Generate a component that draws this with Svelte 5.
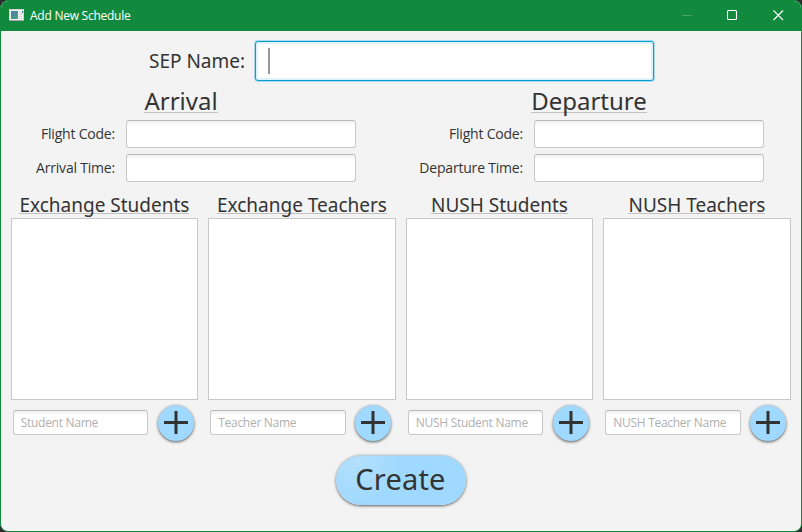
<script>
  const flights = [
    { title: 'Arrival', time: 'Arrival Time:' },
    { title: 'Departure', time: 'Departure Time:' }
  ];
  const groups = [
    { title: 'Exchange Students', hint: 'Student Name' },
    { title: 'Exchange Teachers', hint: 'Teacher Name' },
    { title: 'NUSH Students', hint: 'NUSH Student Name' },
    { title: 'NUSH Teachers', hint: 'NUSH Teacher Name' }
  ];
</script>

<div class="window">
  <header>
    <svg class="app-icon" width="16" height="14" viewBox="0 0 16 14">
      <defs>
        <linearGradient id="pane" x1="0" y1="0" x2="1" y2="1">
          <stop offset="0" stop-color="#467bb0" />
          <stop offset="1" stop-color="#4fa37b" />
        </linearGradient>
      </defs>
      <rect x="0.5" y="1.5" width="14" height="11" fill="#f4f4f4" stroke="#d5d0d5" />
      <path d="M0 12.5h15" stroke="#a9a0a9" />
      <rect x="2" y="3" width="7" height="8" fill="url(#pane)" />
      <path d="M10 4.5h3M10 6.5h3M10 8.5h3M10 10.5h3" stroke="#d3d3d3" />
      <path d="M13.5 3v2" stroke="#477a9f" />
    </svg>
    <h1>Add New Schedule</h1>
    <div class="controls">
      <svg width="46" height="30" viewBox="0 0 46 30"><path d="M18 15.5h10" stroke="#48a467" /></svg>
      <svg width="46" height="30" viewBox="0 0 46 30"><rect x="17.5" y="10.5" width="9" height="9" rx="1" fill="none" stroke="#fff" stroke-width="1.1" /></svg>
      <svg width="46" height="30" viewBox="0 0 46 30"><path d="M17.5 10.5l9.5 9.5M27 10.5l-9.5 9.5" stroke="#fff" stroke-width="1.1" /></svg>
    </div>
  </header>

  <main>
    <div class="sep">
      <span>SEP Name:</span>
      <div class="sep-field"><i></i></div>
    </div>

    <div class="flights">
      {#each flights as flight}
        <section>
          <h2><span>{flight.title}</span></h2>
          <div class="row"><span>Flight Code:</span><div class="field"></div></div>
          <div class="row"><span>{flight.time}</span><div class="field"></div></div>
        </section>
      {/each}
    </div>

    <div class="groups">
      {#each groups as group}
        <section>
          <h3><span>{group.title}</span></h3>
          <div class="list"></div>
          <div class="add">
            <div class="field small">{group.hint}</div>
            <button class="round" aria-label="Add">
              <svg width="24" height="23" viewBox="0 0 24 23"><path d="M0 11.5h24M12 0v23" stroke="#333" stroke-width="3" /></svg>
            </button>
          </div>
        </section>
      {/each}
    </div>

    <button class="create">Create</button>
  </main>
</div>

<style>
  :global(body) {
    margin: 0;
    background: #2d2d2d;
  }
  * {
    box-sizing: border-box;
  }
  .window {
    width: 802px;
    height: 532px;
    overflow: hidden;
    border: 1px solid #128a3e;
    border-radius: 8px;
    background: #f3f3f3;
    color: #333;
    font-family: "Noto Sans", "Open Sans", sans-serif;
  }
  header {
    display: flex;
    align-items: center;
    height: 30px;
    padding-left: 8px;
    background: #128a3e;
    color: #fff;
  }
  .app-icon {
    margin-top: -2px;
  }
  h1, h2, h3 {
    margin: 0;
    font-weight: 400;
  }
  h1 {
    margin-left: 5px;
    font-family: "Open Sans", "Noto Sans", sans-serif;
    font-size: 12px;
    letter-spacing: -0.25px;
    line-height: 28px;
  }
  .controls {
    display: flex;
    height: 30px;
    margin: -2px -1px 0 auto;
  }
  main {
    padding: 10px;
  }
  .sep {
    display: flex;
    align-items: center;
    height: 40px;
    padding-left: 138px;
    font-size: 19px;
  }
  .sep span {
    width: 106px;
    line-height: 40px;
  }
  .sep-field {
    width: 399px;
    height: 40px;
    padding: 6px 12px;
    border: 1px solid #039ed3;
    border-radius: 3px;
    background: #fff;
    box-shadow: 0 0 0 1px #a9d9eb, inset 0 0 0 2px #e0f2f9;
  }
  .sep-field i {
    display: block;
    width: 2px;
    height: 26px;
    background: #999;
  }
  .flights {
    display: flex;
    gap: 63px;
    height: 101px;
  }
  .flights section {
    width: 345px;
  }
  h2 {
    height: 39px;
    padding-left: 15px;
    padding-right: 20px;
    text-align: center;
    font-size: 24px;
    line-height: 39px;
  }
  h2 span {
    display: inline-block;
    height: 32px;
    border-bottom: 1px solid #c2c2c2;
    line-height: 40px;
    vertical-align: top;
  }
  .row {
    display: flex;
    justify-content: flex-end;
    align-items: center;
    gap: 11px;
    height: 28px;
    margin-bottom: 6px;
    font-family: "Open Sans", "Noto Sans", sans-serif;
    font-size: 14px;
    letter-spacing: -0.2px;
    white-space: nowrap;
  }
  .row span {
    padding-bottom: 2px;
  }
  .field {
    flex: none;
    width: 230px;
    height: 28px;
    border: 1px solid #c8c8c8;
    border-top-color: #b8b8b8;
    border-radius: 3px;
    background: linear-gradient(#f1f1f1, #fff 5px);
  }
  .groups {
    display: grid;
    grid-template-columns: repeat(4, 187.5px);
    gap: 10px;
    margin: 10px 0 0 -0.3px;
  }
  h3 {
    height: 26px;
    text-align: center;
    font-size: 19px;
  }
  h3 span {
    display: inline-block;
    height: 22px;
    border-bottom: 1px solid #c2c2c2;
    line-height: 27px;
    vertical-align: top;
  }
  .list {
    height: 182px;
    border: 1px solid #c8c8c8;
    background: #fff;
  }
  .add {
    display: flex;
    align-items: center;
    gap: 9.4px;
    height: 45px;
    padding-left: 2px;
  }
  .small {
    width: 135.5px;
    height: 25px;
    padding-left: 7px;
    color: #b0b0b0;
    font-family: "Open Sans", "Noto Sans", sans-serif;
    font-size: 12px;
    letter-spacing: -0.28px;
    line-height: 23px;
    white-space: nowrap;
  }
  button {
    display: flex;
    align-items: center;
    justify-content: center;
    padding: 0;
    border: 0;
    background: #a0d9ff;
    box-shadow: 0 1px 3px #555, inset 0 1px 1px #b7d0df;
    color: #333;
    font-family: inherit;
  }
  .round {
    width: 36px;
    height: 36px;
    border-radius: 50%;
  }
  .create {
    width: 130px;
    height: 50px;
    margin: 10px 0 0 325px;
    padding: 0 1px 2px 0;
    border-radius: 25px;
    background: radial-gradient(circle at 15% 10%, #b3e0fd, #a0d9ff 45px);
    font-size: 29px;
    letter-spacing: 0.2px;
    line-height: 48px;
  }
</style>
